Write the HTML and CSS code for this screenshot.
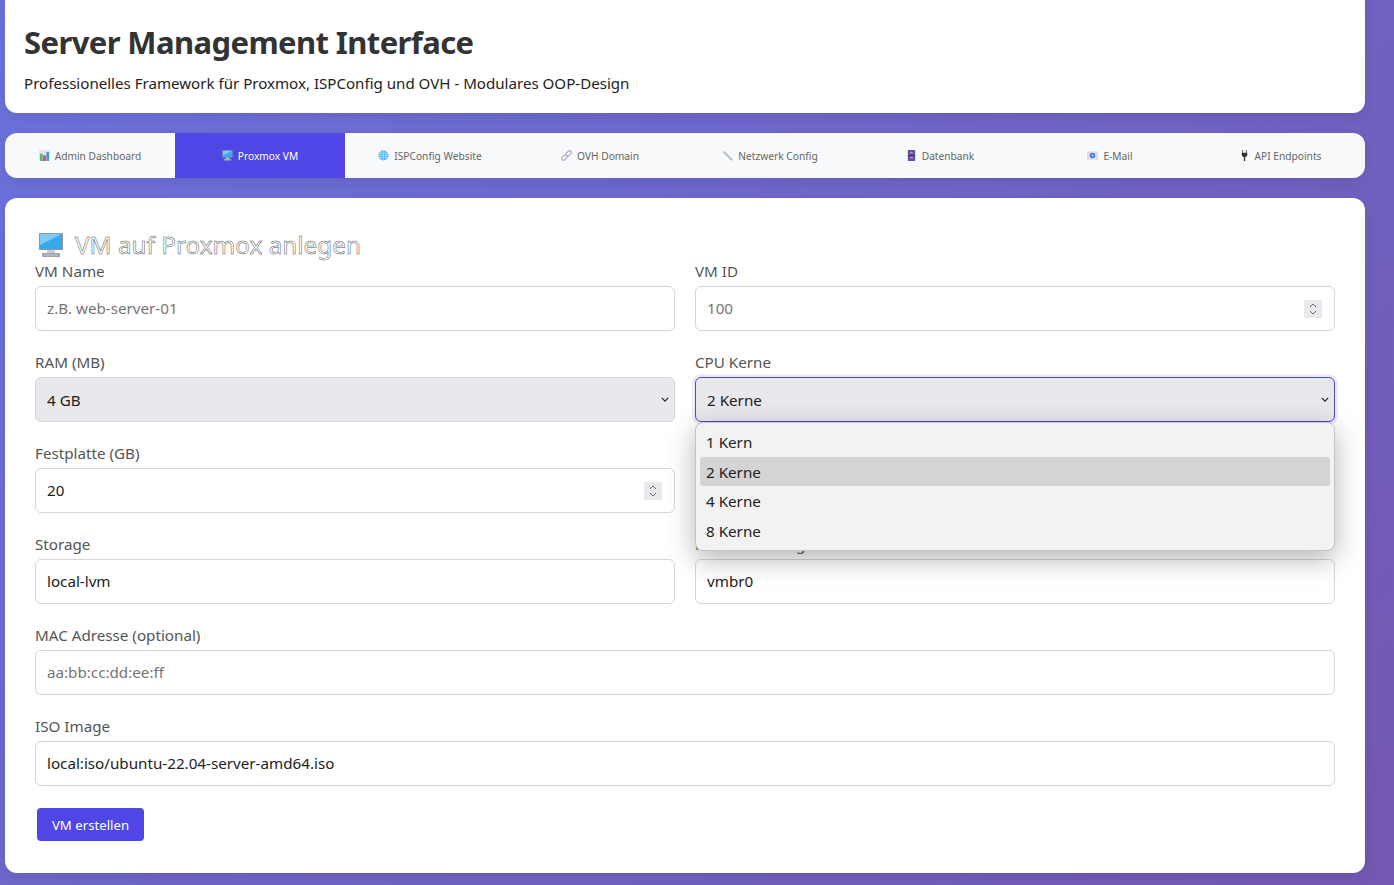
FILE: index.html
```html
<!DOCTYPE html>
<html lang="de">
<head>
<meta charset="utf-8">
<title>Server Management Interface</title>
<link rel="stylesheet" href="styles.css">
</head>
<body>
<svg class="defs" width="0" height="0" aria-hidden="true">
  <symbol id="monitor" viewBox="0 0 26 26">
    <rect x="1" y="1" width="24" height="17" rx="1" fill="#8a96a3"/>
    <rect x="2" y="2" width="22" height="15" fill="#38a8ec"/>
    <path d="M2 2h22L2 13z" fill="#7cccf7"/>
    <rect x="9" y="18" width="8" height="3" fill="#c9ced3"/>
    <rect x="4" y="21" width="18" height="4" rx="1" fill="#9aa1a8"/>
    <path d="M6 23h14" stroke="#c8ccd0" stroke-width="1"/>
  </symbol>
</svg>
<div class="page">
  <header class="header">
    <h1 class="title">Server Management Interface</h1>
    <p class="subtitle">Professionelles Framework für Proxmox, ISPConfig und OVH - Modulares OOP-Design</p>
  </header>

  <nav class="tabs">
    <a class="tab">
      <svg class="tab-icon" viewBox="0 0 12 12"><rect width="12" height="12" fill="#e6e6ea"/><rect x="1" y="4" width="3" height="8" fill="#4cc06a"/><rect x="4.500" y="6" width="3" height="6" fill="#e8387f"/><rect x="8" y="2" width="3" height="10" fill="#3fa2e0"/></svg>
      <span>Admin Dashboard</span>
    </a>
    <a class="tab tab-active">
      <svg class="tab-icon"><use href="#monitor"/></svg>
      <span>Proxmox VM</span>
    </a>
    <a class="tab">
      <svg class="tab-icon" viewBox="0 0 12 12"><circle cx="6" cy="6" r="5.500" fill="#4db4ee"/><path d="M.5 6h11M1.200 3.500h9.600M1.200 8.500h9.600M6 .5v11M3.500 1.500c-1 3-1 6 0 9M8.500 1.500c1 3 1 6 0 9" stroke="#bfe4fa" stroke-width=".7" fill="none"/></svg>
      <span>ISPConfig Website</span>
    </a>
    <a class="tab">
      <svg class="tab-icon" viewBox="0 0 12 12"><g fill="none" stroke="#b9b1c9" stroke-width="1.400"><rect x="-3.300" y="-2" width="6.600" height="4" rx="2" transform="translate(8.300 3.700) rotate(-45)"/><rect x="-3.300" y="-2" width="6.600" height="4" rx="2" transform="translate(3.700 8.300) rotate(-45)"/></g></svg>
      <span>OVH Domain</span>
    </a>
    <a class="tab">
      <svg class="tab-icon" viewBox="0 0 12 12"><path d="M3 3l7.500 7.500" stroke="#b8bcc2" stroke-width="2.200" stroke-linecap="round"/><path d="M1 3.500L3.500 1" stroke="#d4d6da" stroke-width="1.800"/></svg>
      <span>Netzwerk Config</span>
    </a>
    <a class="tab">
      <svg class="tab-icon" viewBox="0 0 12 12"><rect x="2" y="0" width="8" height="12" fill="#6a4f9e"/><rect x="2" y="5.500" width="8" height="1" fill="#43306f"/><rect x="4.500" y="2.500" width="3" height="1" fill="#c6b8e2"/><rect x="4.500" y="8" width="3" height="1" fill="#c6b8e2"/></svg>
      <span>Datenbank</span>
    </a>
    <a class="tab">
      <svg class="tab-icon" viewBox="0 0 12 12"><rect x="0" y="1.500" width="12" height="9" fill="#e3d8ea"/><circle cx="6" cy="6" r="3" fill="#3f7fd6"/><circle cx="6" cy="6" r="1" fill="#cfe0f7"/></svg>
      <span>E-Mail</span>
    </a>
    <a class="tab">
      <svg class="tab-icon" viewBox="0 0 12 12"><path d="M4 0v3M8 0v3" stroke="#555" stroke-width="1"/><path d="M3 3h6v3l-2 2H5L3 6z" fill="#333"/><path d="M6 8v4" stroke="#333" stroke-width="1.400"/></svg>
      <span>API Endpoints</span>
    </a>
  </nav>

  <main class="panel">
    <h2 class="panel-title">
      <svg class="panel-icon"><use href="#monitor"/></svg>
      <span>VM auf Proxmox anlegen</span>
    </h2>
    <form class="form">
      <div class="field">
        <label class="label">VM Name</label>
        <input class="control control-input" type="text" placeholder="z.B. web-server-01">
      </div>
      <div class="field">
        <label class="label">VM ID</label>
        <div class="control-wrap">
          <input class="control control-input" type="text" placeholder="100">
          <span class="spinner"><svg viewBox="0 0 18 18"><path d="M6 7l3-3 3 3M6 11l3 3 3-3" fill="none" stroke="#6b6b6b" stroke-width="1"/></svg></span>
        </div>
      </div>
      <div class="field">
        <label class="label">RAM (MB)</label>
        <div class="control-wrap">
          <select class="control control-select"><option>4 GB</option></select>
          <svg class="chevron" viewBox="0 0 10 6"><path d="M1 1l4 4 4-4" fill="none" stroke="#222" stroke-width="1.500"/></svg>
        </div>
      </div>
      <div class="field">
        <label class="label">CPU Kerne</label>
        <div class="control-wrap">
          <select class="control control-select control-focus"><option>2 Kerne</option></select>
          <svg class="chevron" viewBox="0 0 10 6"><path d="M1 1l4 4 4-4" fill="none" stroke="#222" stroke-width="1.500"/></svg>
          <ul class="menu">
            <li class="menu-item">1 Kern</li>
            <li class="menu-item menu-item-selected">2 Kerne</li>
            <li class="menu-item">4 Kerne</li>
            <li class="menu-item">8 Kerne</li>
          </ul>
        </div>
      </div>
      <div class="field">
        <label class="label">Festplatte (GB)</label>
        <div class="control-wrap">
          <input class="control control-input" type="text" value="20">
          <span class="spinner"><svg viewBox="0 0 18 18"><path d="M6 7l3-3 3 3M6 11l3 3 3-3" fill="none" stroke="#6b6b6b" stroke-width="1"/></svg></span>
        </div>
      </div>
      <div class="field">
        <div class="label"></div>
        <input class="control control-input" type="text">
      </div>
      <div class="field">
        <label class="label">Storage</label>
        <input class="control control-input" type="text" value="local-lvm">
      </div>
      <div class="field">
        <label class="label">Netzwerk Bridge</label>
        <input class="control control-input" type="text" value="vmbr0">
      </div>
      <div class="field field-wide">
        <label class="label">MAC Adresse (optional)</label>
        <input class="control control-input" type="text" placeholder="aa:bb:cc:dd:ee:ff">
      </div>
      <div class="field field-wide">
        <label class="label">ISO Image</label>
        <input class="control control-input" type="text" value="local:iso/ubuntu-22.04-server-amd64.iso">
      </div>
      <div class="field-wide">
        <button class="button" type="button">VM erstellen</button>
      </div>
    </form>
  </main>
</div>
</body>
</html>
```
FILE: styles.css
```css
* { box-sizing: border-box; }

html, body { height: 100%; }

body {
  margin: 0;
  overflow: hidden;
  font-family: "Noto Sans", "Liberation Sans", sans-serif;
  background: linear-gradient(135deg, #6a72dc 0%, #7357b0 100%);
  color: #333;
}

.defs { position: absolute; }

.page {
  width: 1360px;
  margin: -20px 0 0 5px;
  display: flex;
  flex-direction: column;
  gap: 20px;
}

.header {
  background: #fff;
  border-radius: 12px;
  padding: 20px 19px;
  height: 133px;
  box-shadow: 0 4px 12px rgba(0, 0, 0, .08);
}

.title {
  margin: 19px 0 0;
  font-size: 31px;
  line-height: 46px;
  font-weight: 700;
  letter-spacing: -.6px;
  color: #333;
}

.subtitle {
  margin: 6px 0 0;
  font-size: 15.100px;
  line-height: 24px;
  color: #222;
}

.tabs {
  display: grid;
  grid-template-columns: repeat(8, 170px);
  height: 45px;
  background: #f8f9fa;
  border-radius: 12px;
  overflow: hidden;
  box-shadow: 0 4px 12px rgba(0, 0, 0, .08);
}

.tab {
  display: flex;
  align-items: center;
  justify-content: center;
  gap: 5px;
  font-size: 10.200px;
  color: #666;
}

.tab-active {
  background: #4f46e5;
  color: #fff;
}

.tab-icon {
  width: 11px;
  height: 11px;
  flex: none;
}

.panel {
  background: #fff;
  border-radius: 12px;
  height: 675px;
  padding: 30px;
  box-shadow: 0 4px 12px rgba(0, 0, 0, .08);
}

.panel-title {
  display: flex;
  align-items: center;
  gap: 11px;
  height: 32px;
  margin: 0 0 0 3px;
  padding-top: 1px;
  font-size: 24.300px;
  font-weight: 400;
  color: #fff;
  -webkit-text-stroke: .5px #555;
}

.panel-icon {
  width: 26px;
  height: 26px;
  flex: none;
}

.form {
  display: grid;
  grid-template-columns: 640px 640px;
  gap: 20px;
}

.field-wide { grid-column: 1 / -1; }

.label {
  display: block;
  height: 21px;
  margin-bottom: 5px;
  padding-top: 1px;
  font-size: 15.200px;
  line-height: 21px;
  color: #555;
}

.control-wrap { position: relative; }

.control {
  display: block;
  width: 100%;
  height: 45px;
  padding: 0 11px;
  font: inherit;
  font-size: 15.200px;
  color: #222;
  background: #fff;
  border: 1px solid #d5d5da;
  border-radius: 6px;
  outline: none;
}

.control-input { padding-bottom: 2px; }

.control::placeholder { color: #757575; }

.control-select {
  appearance: none;
  background: #e8e8ed;
}

.control-focus {
  border-color: #4f46e5;
  box-shadow: 0 0 0 3px rgba(79, 70, 229, .1);
}

.chevron {
  position: absolute;
  right: 6px;
  top: 20px;
  width: 8px;
  height: 5px;
}

.spinner {
  position: absolute;
  right: 13px;
  top: 14px;
  width: 18px;
  height: 18px;
  background: #e8e8ed;
}

.spinner svg { display: block; }

.menu {
  position: absolute;
  z-index: 2;
  top: 100%;
  left: 0;
  width: 100%;
  height: 129px;
  margin: 0;
  padding: 4px;
  list-style: none;
  background: #f2f2f2;
  border: 1px solid #c4c4c4;
  border-radius: 8px;
  box-shadow: 0 8px 28px rgba(0, 0, 0, .3);
  font-size: 15.200px;
}

.menu-item {
  height: 29.500px;
  padding: 1px 6px 0;
  line-height: 28.500px;
  color: #222;
  border-radius: 3px;
}

.menu-item-selected { background: #d4d4d4; }

.button {
  display: block;
  width: 107px;
  height: 33px;
  margin: 2px;
  padding: 0;
  font: inherit;
  font-size: 13.200px;
  color: #fff;
  background: #4f46e5;
  border: 0;
  border-radius: 4px;
}
```
